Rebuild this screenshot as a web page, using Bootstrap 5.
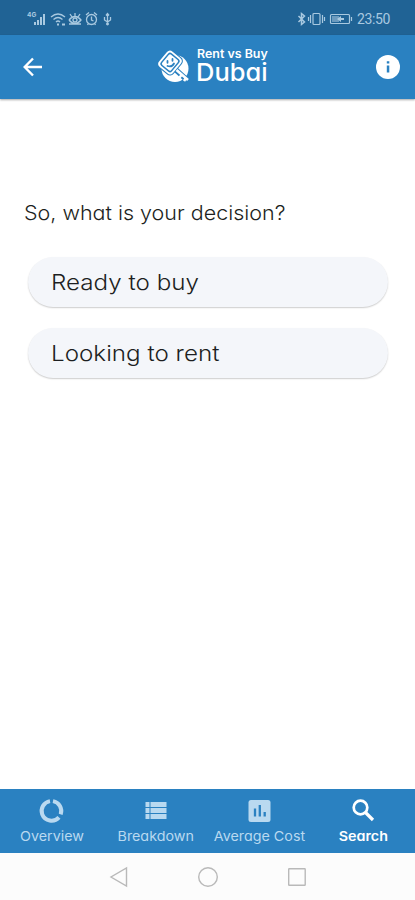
<!DOCTYPE html>
<html lang="en">
<head>
<meta charset="utf-8">
<meta name="viewport" content="width=device-width, initial-scale=1">
<title>Rent vs Buy Dubai</title>
<link href="https://cdn.jsdelivr.net/npm/bootstrap@5.3.0/dist/css/bootstrap.min.css" rel="stylesheet">
<style>
  body { font-family: Inter, "Open Sans", sans-serif; font-feature-settings: "cv11" 1; color: #1d1f22; height: 900px; overflow: hidden; }
  svg { display: block; flex: none; }
  .wide { display: inline-block; transform: scaleX(1.1); transform-origin: left center; }
  .status-strip { height: 35px; background: #206395; color: #a9c9e0; padding: 2px 25px 0 27px; }
  .clock { font-family: Roboto, sans-serif; font-size: 14px; line-height: 18px; letter-spacing: -.35px; margin-left: 4px; }
  .app-header { height: 64px; background: #2a81c1; padding: 0 15px 0 23px; box-shadow: 0 1px 2px rgba(0,0,0,.35); z-index: 1; position: relative; }
  .brand-group { margin-left: 6px; }
  .brand-text { width: 72px; margin-left: 6px; padding-bottom: 2px; }
  .brand-small { font-size: 11.5px; line-height: 12px; font-weight: 600; transform: scaleX(1.08); transform-origin: left; }
  .brand-large { font-size: 24.5px; line-height: 24px; font-weight: 500; transform: scaleX(1.04); transform-origin: left; margin-left: -1px; }
  .question { font-size: 20px; line-height: 30px; font-weight: 350; padding: 99px 24px 0; margin-bottom: 29px; }
  .question .wide { transform: scaleX(1.074); }
  .choices { padding: 0 27px 0 28px; gap: 21px; }
  .choice { height: 50px; border: 0; border-radius: 25px; background: #f4f6fa; font-size: 22px; line-height: 30px; font-weight: 350; padding: 0 24px 0 23px; text-align: left; color: inherit; box-shadow: 0 1px 1.500px rgba(0,0,0,.2); }
  .tab-strip { height: 64px; background: #2a81c1; }
  .tab-item { color: #b9d9f0; font-size: 13px; line-height: 18px; padding-top: 8px; width: 25%; white-space: nowrap; }
  .tab-item svg { margin-bottom: 3px; }
  .tab-item .wide { transform-origin: center; }
  .tab-item.active { color: #fff; font-weight: 600; }
  .system-strip { height: 47px; background: #fcfcfc; gap: 68px; }
</style>
<script src="https://cdn.jsdelivr.net/npm/bootstrap@5.3.0/dist/js/bootstrap.bundle.min.js"></script>
</head>
<body class="d-flex flex-column bg-white m-0">
<div class="status-strip d-flex align-items-center justify-content-between flex-shrink-0">
  <svg width="86" height="16" viewBox="0 0 86 16" fill="none" stroke="currentColor" stroke-width="1.300">
    <text x="0" y="6" font-size="6.500" font-weight="700" fill="currentColor" stroke="none">4G</text>
    <path d="M8 14v-3M11 14V9M14 14V6M17 14V3" stroke-width="2"/>
    <path d="M24 6q7-6 14 0M26.500 8.500q4.500-4 9 0M29 11q2-2 4 0"/><path d="M30 13.500h2M35 13.500h3" stroke-width="2"/>
    <path d="M42 9q6-7 12 0q-6 7-12 0M48 2v3M43 3l2 3M53 3l-2 3M42 13h12"/><circle cx="48" cy="9" r="2"/>
    <circle cx="64.500" cy="8.500" r="5"/><path d="M64.500 5.500v3.500l2 1M59 4l3-2.500M70 4l-3-2.500M60.500 14l1-1.500M68.500 14l-1-1.500"/>
    <path d="M80.500 3v11M77.500 6v3l3 2 3-2V6M79 4.500l1.500-2 1.500 2"/><circle cx="80.500" cy="13" r=".8"/>
  </svg>
  <div class="d-flex align-items-center">
    <svg width="56" height="16" viewBox="0 0 56 16" fill="none" stroke="currentColor" stroke-width="1.200">
      <path d="M1.500 5l6 6-3 2.500v-11L7.500 5l-6 6" stroke-width="1.500"/>
      <rect x="16" y="2.500" width="7" height="11" rx="1"/><path d="M13.500 4v8M25.500 4v8M11.500 6v4M27.500 6v4"/>
      <rect x="33.500" y="3.500" width="19" height="9" rx="1"/><path d="M54.500 6v4"/>
      <path d="M35 5h7v6h-7z" fill="currentColor" opacity=".55" stroke="none"/><path d="M40 8l4-3v2h3v2h-3v2z" fill="currentColor" stroke="none"/>
    </svg>
    <span class="clock">23:50</span>
  </div>
</div>
<header class="app-header d-flex align-items-center justify-content-between flex-shrink-0 text-white">
  <svg width="20" height="20" viewBox="0 0 20 20" fill="none" stroke="#fff" stroke-width="2.400"><path d="M19 10H2.500M10 1.500L1.700 10l8.300 8.500"/></svg>
  <div class="brand-group d-flex align-items-center">
    <svg width="34" height="34" viewBox="0 0 34 34">
      <circle cx="18" cy="18.500" r="13.500" fill="#fff"/>
      <path d="M19 20l11 10M24 27.500l2-2M28 31l2-2" stroke="#2a81c1" stroke-width="5.500"/>
      <g transform="rotate(40 13 12.500)">
        <rect x="3" y="1.500" width="20" height="22" rx="4.500" fill="#2a81c1"/>
        <rect x="4" y="2.500" width="18" height="20" rx="4" fill="#fff"/>
        <rect x="5.800" y="4.300" width="14.400" height="16.400" rx="2.500" fill="#2a81c1"/>
        <rect x="7.300" y="5.800" width="11.400" height="13.400" rx="1.500" fill="#fff"/>
      </g>
      <path d="M10.500 11v1.800M15.500 9v1.800M10.500 16q4.500 1.500 6.500-2.500" stroke="#2a81c1" stroke-width="1.800" fill="none" stroke-linecap="round"/>
      <path d="M19.500 20l11.500 10M25 24.500l-2.500 3M29 28l-2 3" stroke="#fff" stroke-width="2.600" fill="none"/>
    </svg>
    <div class="brand-text">
      <div class="brand-small text-nowrap">Rent vs Buy</div>
      <div class="brand-large text-nowrap">Dubai</div>
    </div>
  </div>
  <svg width="24" height="24" viewBox="0 0 24 24"><circle cx="12" cy="12" r="12" fill="#fff"/><path d="M10.800 6.200h2.500v2.300h-2.500zM10.800 10.500h2.500v7h-2.500z" fill="#2a81c1"/></svg>
</header>
<main class="flex-grow-1">
  <p class="question text-nowrap"><span class="wide">So, what is your decision?</span></p>
  <div class="choices d-flex flex-column">
    <button type="button" class="choice"><span class="wide">Ready to buy</span></button>
    <button type="button" class="choice"><span class="wide">Looking to rent</span></button>
  </div>
</main>
<nav class="tab-strip d-flex flex-shrink-0">
  <div class="tab-item d-flex flex-column align-items-center"><svg width="27" height="27" viewBox="0 0 27 27" fill="none" stroke="currentColor" stroke-width="4"><path d="M15 4.100a10 10 0 0 1 7.700 13.200M21 20.400A10 10 0 0 1 4.200 17.300a10 10 0 0 1 7.800-13.200"/></svg><span class="wide">Overview</span></div>
  <div class="tab-item d-flex flex-column align-items-center"><svg width="27" height="27" viewBox="0 0 27 27" fill="currentColor"><path d="M3.500 5h4v5h-4zM8.500 5h16v5h-16zM3.500 11h4v5h-4zM8.500 11h16v5h-16zM3.500 17h4v5h-4zM8.500 17h16v5h-16z"/></svg><span class="wide">Breakdown</span></div>
  <div class="tab-item d-flex flex-column align-items-center"><svg width="27" height="27" viewBox="0 0 27 27"><rect x="2.500" y="3" width="22" height="22" rx="2.500" fill="currentColor"/><path d="M9 11.500v8M13.800 8v11.500M18.700 15v4.500" stroke="#2a81c1" stroke-width="2.300"/></svg><span class="wide">Average Cost</span></div>
  <div class="tab-item active d-flex flex-column align-items-center"><svg width="27" height="27" viewBox="0 0 27 27" fill="none" stroke="currentColor" stroke-width="2.700"><circle cx="10.500" cy="10.500" r="6.800"/><path d="M15.500 15.500l7.500 7.500" stroke-width="3.200"/></svg><span class="wide">Search</span></div>
</nav>
<div class="system-strip d-flex align-items-center justify-content-center flex-shrink-0">
  <svg width="20" height="22" viewBox="0 0 20 22" fill="none" stroke="#b9b9b9" stroke-width="1.400"><path d="M17.500 2v18L2 11z"/></svg>
  <svg width="22" height="22" viewBox="0 0 22 22" fill="none" stroke="#b9b9b9" stroke-width="1.400"><circle cx="11" cy="11" r="9.300"/></svg>
  <svg width="20" height="20" viewBox="0 0 20 20" fill="none" stroke="#b9b9b9" stroke-width="1.400"><rect x="1.700" y="1.700" width="16.500" height="16.500" rx=".5"/></svg>
</div>
</body>
</html>
